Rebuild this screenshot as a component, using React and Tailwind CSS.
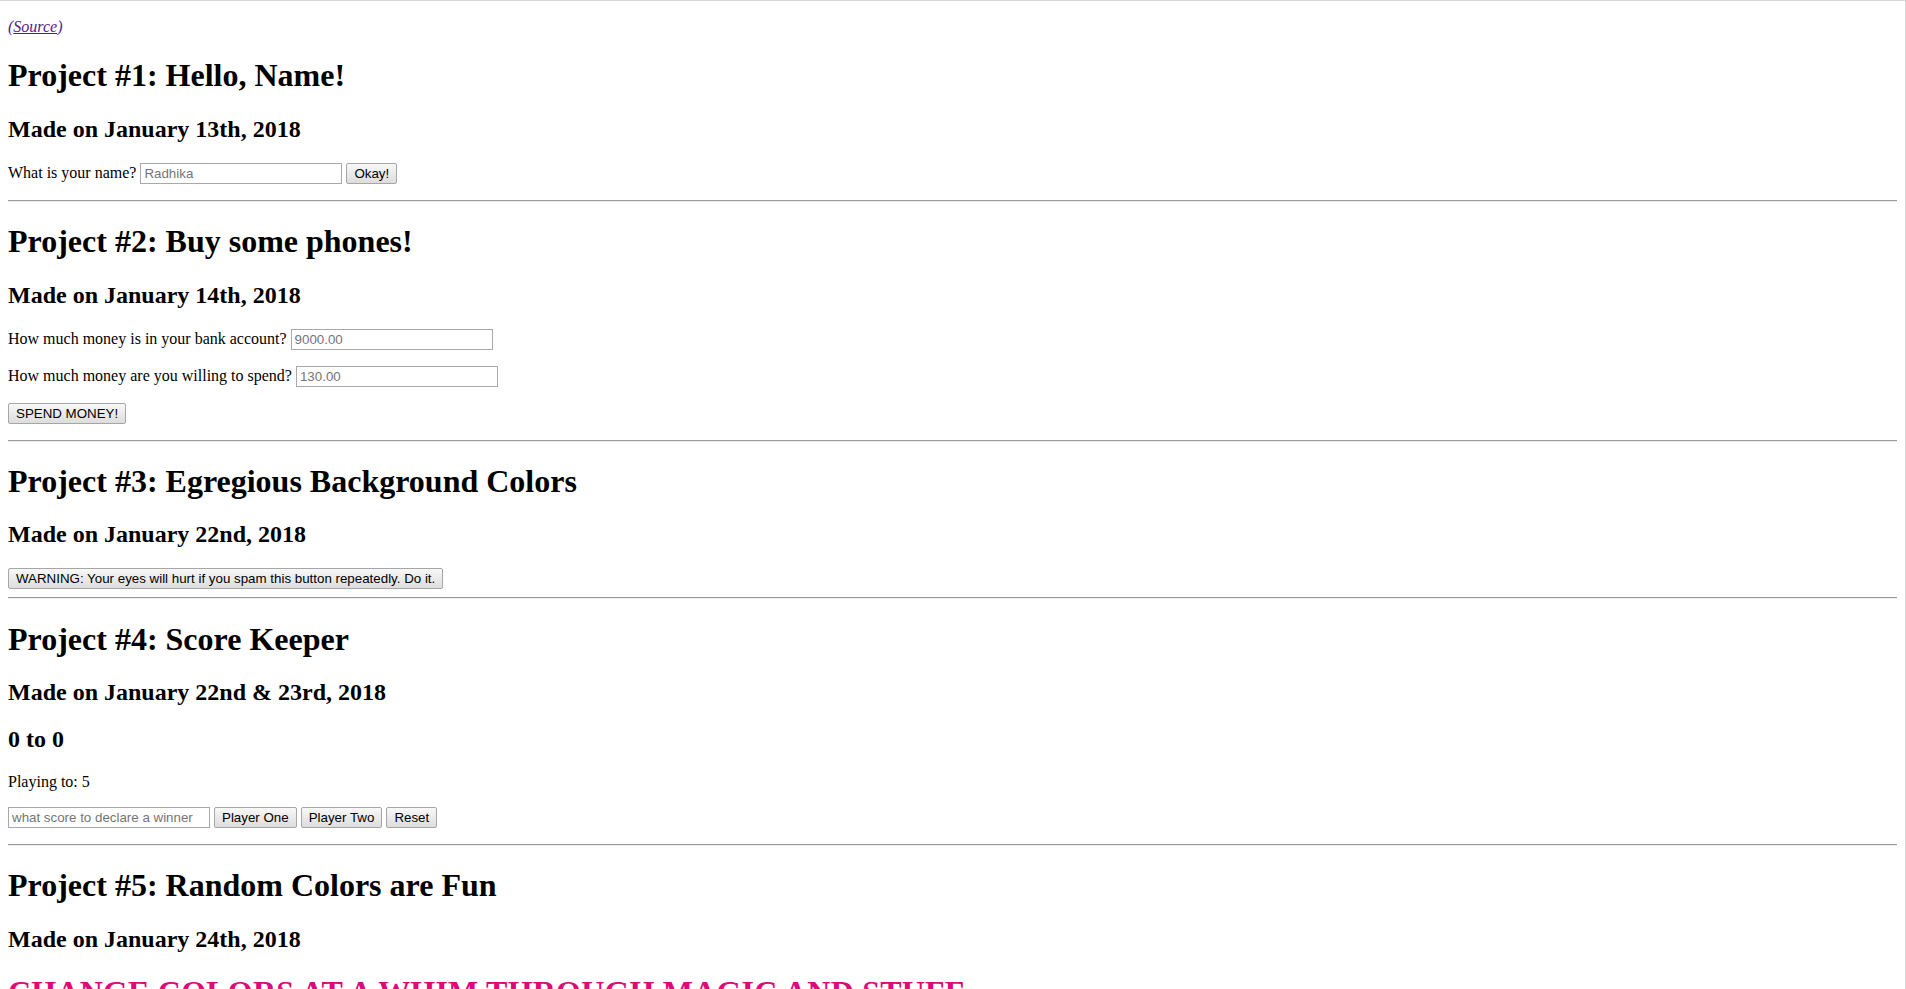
import { useState } from "react";

const H1 = "text-[32px] font-bold leading-[normal] my-[21.44px]";
const H2 = "text-[24px] font-bold leading-[normal] my-[19.92px]";
const P = "my-4 leading-[normal]";
const INPUT =
  "w-[202px] align-baseline bg-white border border-[#a9a9a9] px-[3px] py-[2px] text-[13.333px] leading-[normal] font-['Liberation_Sans',Arial,sans-serif] text-black placeholder:text-[#757575] outline-none";
const BTN =
  "align-baseline border border-[#a6a6a6] rounded-[2px] bg-gradient-to-b from-[#f8f8f8] to-[#dddddd] px-[7px] py-[2px] text-[13.333px] leading-[normal] font-['Liberation_Sans',Arial,sans-serif] text-black cursor-default";

function Rule() {
  return <hr className="my-2 h-0 border-t border-b border-t-[#9a9a9a] border-b-[#eeeeee]" />;
}

export default function App() {
  const [name, setName] = useState("");
  const [p1, setP1] = useState(0);
  const [p2, setP2] = useState(0);
  const [goal, setGoal] = useState(5);
  const [goalInput, setGoalInput] = useState("");
  const [pink] = useState("#dd0a7b");

  const over = p1 >= goal || p2 >= goal;

  return (
    <div className="h-[989px] overflow-hidden bg-white border-t border-r border-[#d6d6d6] font-['Liberation_Serif','Times_New_Roman',serif] text-[16px] text-black">
      <div className="px-2 pt-px">
        <p className={P}>
          <a href="#" className="italic text-[#551a8b]">
            (<span className="underline">Source</span>)
          </a>
        </p>

        {/* Project 1 */}
        <h1 className={H1}>Project #1: Hello, Name!</h1>
        <h2 className={H2}>Made on January 13th, 2018</h2>
        <p className={P}>
          What is your name?{" "}
          <input className={INPUT} placeholder="Radhika" value={name} onChange={(e) => setName(e.target.value)} />{" "}
          <button className={BTN}>Okay!</button>
        </p>
        <Rule />

        {/* Project 2 */}
        <h1 className={H1}>Project #2: Buy some phones!</h1>
        <h2 className={H2}>Made on January 14th, 2018</h2>
        <p className={P}>
          How much money is in your bank account? <input className={INPUT} placeholder="9000.00" />
        </p>
        <p className={P}>
          How much money are you willing to spend? <input className={INPUT} placeholder="130.00" />
        </p>
        <p className={P}>
          <button className={BTN}>SPEND MONEY!</button>
        </p>
        <Rule />

        {/* Project 3 */}
        <h1 className={H1}>Project #3: Egregious Background Colors</h1>
        <h2 className={H2}>Made on January 22nd, 2018</h2>
        <div className="leading-[normal]">
          <button className={BTN}>WARNING: Your eyes will hurt if you spam this button repeatedly. Do it.</button>
        </div>
        <Rule />

        {/* Project 4 */}
        <h1 className={H1}>Project #4: Score Keeper</h1>
        <h2 className={H2}>Made on January 22nd &amp; 23rd, 2018</h2>
        <h2 className={H2}>
          {p1} to {p2}
        </h2>
        <p className={P}>Playing to: {goal}</p>
        <p className={P}>
          <input
            className={INPUT}
            placeholder="what score to declare a winner"
            value={goalInput}
            onChange={(e) => {
              setGoalInput(e.target.value);
              const n = parseInt(e.target.value, 10);
              if (n > 0) setGoal(n);
            }}
          />{" "}
          <button className={BTN} onClick={() => !over && setP1(p1 + 1)}>Player One</button>{" "}
          <button className={BTN} onClick={() => !over && setP2(p2 + 1)}>Player Two</button>{" "}
          <button className={BTN} onClick={() => { setP1(0); setP2(0); }}>Reset</button>
        </p>
        <Rule />

        {/* Project 5 */}
        <h1 className={H1}>Project #5: Random Colors are Fun</h1>
        <h2 className={H2}>Made on January 24th, 2018</h2>
        <h1 className={`${H1} tracking-[0.2px]`} style={{ color: pink }}>
          CHANGE COLORS AT A WHIM THROUGH MAGIC AND STUFF
        </h1>
      </div>
    </div>
  );
}
